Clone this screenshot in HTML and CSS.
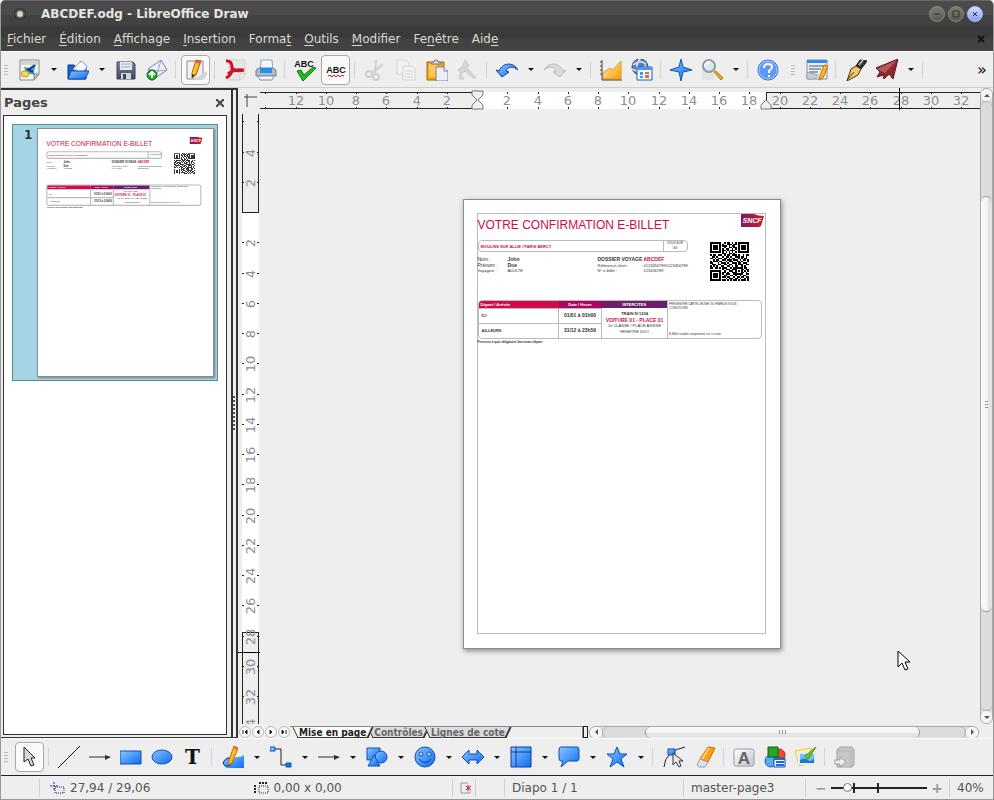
FILE: index.html
```html
<!DOCTYPE html>
<html lang="fr">
<head>
    <meta charset="UTF-8">
    <meta name="viewport" content="width=device-width, initial-scale=1.0">
    <title>ABCDEF.odg - LibreOffice Draw</title>
    <link rel="stylesheet" href="styles.css">
</head>
<body>

<!-- Dégradés et symboles partagés -->
<svg class="defs" aria-hidden="true">
    <defs>
        <linearGradient id="blue" x1="0" y1="0" x2="1" y2="1"><stop offset="0" stop-color="#8cc6ff"/><stop offset="1" stop-color="#0a6cf5"/></linearGradient>
        <linearGradient id="gold" x1="0" y1="0" x2="1" y2="1"><stop offset="0" stop-color="#fff3b0"/><stop offset="1" stop-color="#ff9a00"/></linearGradient>
        <linearGradient id="grey" x1="0" y1="0" x2="1" y2="1"><stop offset="0" stop-color="#ffffff"/><stop offset="1" stop-color="#c4c6cc"/></linearGradient>
        <linearGradient id="steel" x1="0" y1="0" x2="0" y2="1"><stop offset="0" stop-color="#8088a0"/><stop offset="1" stop-color="#3c4560"/></linearGradient>
        <linearGradient id="sncfRed" x1="0" y1="0" x2="1" y2="0"><stop offset="0" stop-color="#7b1a6b"/><stop offset="1" stop-color="#d81824"/></linearGradient>
        <symbol id="qr" viewBox="0 0 25 25"><path id="qrPath" shape-rendering="crispEdges"/></symbol>
        <symbol id="sncf" viewBox="0 0 24 13">
            <path d="M1 0H14Q18 2 24 2L21 12Q20 13 18 13H1Z" fill="url(#sncfRed)"/>
            <text x="12" y="9" class="sncf-text">SNCF</text>
        </symbol>
    </defs>
</svg>

<div class="window">
    <header class="titlebar">
        <svg class="app-dot" viewBox="0 0 12 12"><circle cx="6" cy="6" r="6" fill="#2e2e2e"/><circle cx="6" cy="6" r="5" fill="#555"/><circle cx="6" cy="6" r="3" fill="#d8d4cc"/></svg>
        <h1>ABCDEF.odg - LibreOffice Draw</h1>
        <div class="window-buttons">
            <button aria-label="Réduire"><svg viewBox="0 0 14 14"><path d="M4 7h6"/></svg></button>
            <button aria-label="Agrandir"><svg viewBox="0 0 14 14"><path d="M4 4h6v6h-6z"/></svg></button>
            <button class="close" aria-label="Fermer"><svg viewBox="0 0 14 14"><path d="M5 5l4 4M9 5l-4 4"/></svg></button>
        </div>
    </header>

    <nav class="menubar">
        <a href="#"><u>F</u>ichier</a>
        <a href="#"><u>É</u>dition</a>
        <a href="#"><u>A</u>ffichage</a>
        <a href="#"><u>I</u>nsertion</a>
        <a href="#">Forma<u>t</u></a>
        <a href="#"><u>O</u>utils</a>
        <a href="#"><u>M</u>odifier</a>
        <a href="#">Fe<u>n</u>être</a>
        <a href="#">Aid<u>e</u></a>
        <button class="close-doc" aria-label="Fermer le document"><svg viewBox="0 0 8 8"><path d="M1 1l6 6M7 1l-6 6" stroke="#111" stroke-width="2"/></svg></button>
    </nav>

    <div class="toolbar">
        <span class="grip"></span>
        <button aria-label="Nouveau"><svg viewBox="0 0 22 22"><path d="M1 1h19v14l-5 6h-14z" fill="#f4f4ee" stroke="#888a80"/><path d="M2 2h17v4h-17z" fill="#d4d6ce"/><path d="M5 8l6 1 6-3-2 6 1 4-9-2z" fill="#3a9be8"/><path d="M9 11l7-5M8 10l6 3" stroke="#173b64" stroke-width="2"/><ellipse cx="6" cy="15" rx="4" ry="3" fill="#f5d95a" stroke="#c89b1c"/><path d="M20 15l-5 6v-6z" fill="#bfc3bb" stroke="#888a80"/></svg></button>
        <button class="drop" aria-label="Options de Nouveau"></button>
        <button aria-label="Ouvrir"><svg viewBox="0 0 22 22"><path d="M1 6h6l2 2h10v12h-18z" fill="#1d62cc" stroke="#0c3c94"/><path d="M6 10l8-8 6 5-4 8z" fill="#f6f8ff" stroke="#8d9cc0"/><path d="M4 12h18l-4 8h-17z" fill="url(#blue)" stroke="#104cae"/></svg></button>
        <button class="drop" aria-label="Options de Ouvrir"></button>
        <button aria-label="Enregistrer"><svg viewBox="0 0 22 22"><path d="M2 3h16l2 2v15h-18z" fill="url(#steel)" stroke="#3b435a"/><path d="M5 3h12v8h-12z" fill="#e6eaf1"/><path d="M6 5h10M6 8h10" stroke="#aab0be"/><path d="M6 14h10v6h-10z" fill="#cfd3dc"/><path d="M8 15h3v5h-3z" fill="#3c4560"/></svg></button>
        <button aria-label="Envoyer par e-mail"><svg viewBox="0 0 22 22"><path d="M2 10l13-9 6 10-13 9z" fill="#eef0fb" stroke="#7e82a6"/><path d="M2 10l10 2 3-11M8 20l4-8 9-1" fill="none" stroke="#a0a4c4"/><circle cx="6" cy="16" r="5" fill="#19a821" stroke="#0b7013"/><path d="M6 19v-5M3 16l3-3 3 3" fill="none" stroke="#fff" stroke-width="2"/></svg></button>
        <span class="sep"></span>
        <button class="pressed" aria-label="Mode édition" aria-pressed="true"><svg viewBox="0 0 22 22"><path d="M2 2h16v18h-16z" fill="#f2f2f4" stroke="#8b8d92"/><path d="M8 21l14-9v4l-4 5z" fill="#d5d5d8"/><path d="M11 1l5 1-5 14-4 3v-5z" fill="#ffae1a" stroke="#b76500"/><path d="M13 2l-5 13" stroke="#ffe07a"/><path d="M11 1l5 1-1 3-5-2z" fill="#e05a48"/><path d="M7 15l3 1-3 3z" fill="#333"/></svg></button>
        <span class="sep"></span>
        <button aria-label="Exporter en PDF"><svg viewBox="0 0 22 22"><path d="M5 1h16v14l-5 6h-11z" fill="#e6e6e6" stroke="#cfcfcf"/><path d="M21 15l-5 6v-6z" fill="#f8f8f8" stroke="#cfcfcf"/><path d="M2 2q6-1 6 7 4 4 12 2M8 8q1 7-6 11M4 15q6-5 15-4" fill="none" stroke="#cf1020" stroke-width="3"/></svg></button>
        <button aria-label="Imprimer"><svg viewBox="0 0 22 22"><path d="M6 1h11l1 11h-13z" fill="#f4f7fb" stroke="#9aa2b2"/><path d="M1 11l3-2h14l3 2v6h-20z" fill="#b4b9c6" stroke="#767c8c"/><path d="M5 9h12v5h-12z" fill="#1e90ee"/><path d="M3 17h16l-2 4h-12z" fill="#f2f4f8" stroke="#8c92a2"/></svg></button>
        <span class="sep"></span>
        <button aria-label="Orthographe"><svg viewBox="0 0 22 22"><text x="10" y="8" class="abc">ABC</text><path d="M3 12l4-1 3 5 9-8 3 1-13 13z" fill="#1dbb1d" stroke="#0a7d0a"/></svg></button>
        <button class="pressed" aria-label="Vérification automatique" aria-pressed="true"><svg viewBox="0 0 22 22"><text x="11" y="14" class="abc">ABC</text><path d="M3 17l2-1 2 2 2-2 2 2 2-2 2 2 2-2 2 1" fill="none" stroke="#e01010"/></svg></button>
        <span class="sep"></span>
        <button disabled aria-label="Couper"><svg viewBox="0 0 22 22" fill="none" stroke="#cfcfcf" stroke-width="2"><path d="M12 1l-1 13M19 5l-11 9"/><circle cx="5" cy="15" r="3"/><circle cx="12" cy="18" r="3"/></svg></button>
        <button disabled aria-label="Copier"><svg viewBox="0 0 22 22" fill="#f2f2f2" stroke="#d4d4d4"><path d="M2 1h9l3 3v11h-12z"/><path d="M8 7h9l3 3v11h-12z"/><path d="M10 12h8M10 15h8M10 18h8"/></svg></button>
        <button aria-label="Coller"><svg viewBox="0 0 22 22"><path d="M1 3h17v18h-17z" fill="#f2a71d" stroke="#a8690a"/><path d="M3 5h8v13h-8z" fill="#ffc852"/><path d="M5 5q0-2 3-2l1-2h2l1 2q3 0 3 2z" fill="#e2e4e8" stroke="#70747c"/><path d="M10 8h8l4 4v10h-12z" fill="#eceefa" stroke="#7a80a4"/><path d="M18 8v4h4" fill="#fff" stroke="#7a80a4"/></svg></button>
        <button disabled aria-label="Pinceau de format"><svg viewBox="0 0 22 22" fill="#d6d6d6" stroke="#cccccc"><path d="M8 1l4 5-2 3 9 9-2 2-9-8-4 3-3-4 4-3z"/><path d="M3 15l4 5h-5z"/></svg></button>
        <span class="sep"></span>
        <button aria-label="Annuler"><svg viewBox="0 0 22 22"><path d="M0 11l3 1c3-8 14-10 19-1-5-4-10-4-12 1l3 1-7 5z" fill="url(#blue)" stroke="#0b479e"/></svg></button>
        <button class="drop" aria-label="Actions à annuler"></button>
        <button disabled aria-label="Rétablir"><svg viewBox="0 0 22 22"><path d="M22 11l-3 1c-3-8-14-10-19-1 5-4 10-4 12 1l-3 1 7 5z" fill="#dadada" stroke="#bcbcbc"/></svg></button>
        <button class="drop" aria-label="Actions à rétablir"></button>
        <span class="sep"></span>
        <button aria-label="Diagramme"><svg viewBox="0 0 22 22"><path d="M3 14l7-5 3 2 8-9v18h-18z" fill="url(#gold)" stroke="#e09a20"/><path d="M2 1v20h20M0 3h2M0 7h2M0 11h2M0 15h2" fill="none" stroke="#444"/></svg></button>
        <button aria-label="Hyperlien"><svg viewBox="0 0 22 22"><circle cx="9" cy="8" r="8" fill="#5b7bb5" stroke="#34508a"/><path d="M2 6q7-6 13-1M1 10q8 5 14-4M9 0q-6 7 0 15" fill="none" stroke="#cbd9f2" stroke-width="2"/><path d="M6 8h15v13h-15z" fill="#f2f8ff" stroke="#1b62c0"/><path d="M6 8h15v3h-15z" fill="#4a98ea"/><path d="M9 13h3v3h-3zM9 17h3v2h-3z" fill="#4a98ea"/><path d="M14 13h4v2h-4zM14 16h4v3h-4z" fill="#f26b21"/></svg></button>
        <span class="sep"></span>
        <button aria-label="Navigateur"><svg viewBox="0 0 22 22"><path d="M11 0l2 8 9 3-9 2-2 9-2-9-9-2 9-3z" fill="url(#blue)" stroke="#0d55b8"/></svg></button>
        <button aria-label="Zoom"><svg viewBox="0 0 22 22"><path d="M1 6h12v15h-12z" fill="#e2e2e2"/><path d="M13 13l2-1 7 7-2 2z" fill="#f5a21c" stroke="#c47a10"/><circle cx="8" cy="7" r="6" fill="#d5eaf2" stroke="#8b9ba2" stroke-width="2"/><path d="M4 7q1-4 5-4" fill="none" stroke="#fff" stroke-width="2"/></svg></button>
        <button class="drop" aria-label="Options de zoom"></button>
        <span class="sep"></span>
        <button aria-label="Aide"><svg viewBox="0 0 22 22"><circle cx="11" cy="11" r="10" fill="#5c98f8" stroke="#3068d0"/><circle cx="11" cy="11" r="9" fill="none" stroke="#b4d0ff"/><path d="M7 9q0-4 4-4t4 3q0 2-3 4v2" fill="none" stroke="#fff" stroke-width="2"/><path d="M11 16h2v2h-2z" fill="#fff"/></svg></button>
        <span class="grip second"></span>
        <button aria-label="Formulaire"><svg viewBox="0 0 22 22"><path d="M1 1h20v19h-20z" fill="#eceef4" stroke="#8a90a0"/><path d="M1 1h20v3h-20z" fill="#2c8af0"/><path d="M3 7h15M3 10h12M3 13h9" stroke="#9ba1b0" stroke-width="2"/><path d="M1 13l11 3-3 4h-8z" fill="#c9ccd4" stroke="#a0a4ae"/><path d="M18 6l4 1-5 12-4 2 1-4z" fill="#ffb822" stroke="#b97300"/></svg></button>
        <span class="sep"></span>
        <button aria-label="Stylo"><svg viewBox="0 0 22 22"><path d="M11 7l4-6 7 1-6 8z" fill="#333" stroke="#111"/><path d="M14 6l4-5" stroke="#bbb" stroke-width="2"/><path d="M11 7l5 3-3 6-11 6 4-12z" fill="#f3c766" stroke="#4b3410"/><path d="M2 21l7-8" stroke="#4b3410"/></svg></button>
        <button aria-label="Effet de flèche"><svg viewBox="0 0 22 22"><path d="M22 0l-5 20-4-5-5 5-1-4-6 2 3-5-4-4z" fill="#8c2a30" stroke="#5e1418"/><path d="M21 1l-12 13-8-4z" fill="#b8585c"/></svg></button>
        <button class="drop" aria-label="Autres effets"></button>
        <span class="sep"></span>
        <button class="more" aria-label="Plus d'outils">»</button>
    </div>

    <main class="main">
        <aside class="pages">
            <div class="pages-head">
                <h2>Pages</h2>
                <button aria-label="Fermer le volet"><svg viewBox="0 0 8 8"><path d="M0 0l8 8M8 0l-8 8" stroke="#444" stroke-width="2"/></svg></button>
            </div>
            <div class="pages-list">
                <a class="page-item" href="#page1">
                    <span class="page-number">1</span>
                    <svg class="thumb" viewBox="0 0 314 446" aria-hidden="true">
                        <text x="14" y="30" class="t-title">VOTRE CONFIRMATION E-BILLET</text>
                        <use href="#sncf" x="272" y="14" width="24" height="13"/>
                        <g fill="none" stroke="#bbb" stroke-width="2">
                            <rect x="15" y="41" width="207" height="12" rx="4"/>
                            <path d="M198 41v12"/>
                            <rect x="15" y="101" width="278" height="37" rx="4"/>
                        </g>
                        <text x="19" y="49" class="t-bold red">MOULINS SUR ALLIE / PARIS BERCY</text>
                        <text x="201" y="47" class="t-small">VOUS EUR</text>
                        <text x="15" y="62" class="t-small">Nom :</text><text x="45" y="62" class="t-name">John</text>
                        <text x="15" y="68" class="t-small">Prénom :</text><text x="45" y="68" class="t-name">Doe</text>
                        <text x="15" y="73" class="t-small">Voyageur :</text><text x="45" y="73" class="t-small">ADULTE</text>
                        <text x="132" y="62" class="t-name">DOSSIER VOYAGE :<tspan class="red">ABCDEF</tspan></text>
                        <text x="132" y="68" class="t-small">Référence client :</text><text x="179" y="68" class="t-small">01234567890123456789</text>
                        <text x="132" y="73" class="t-small">N° e-billet :</text><text x="179" y="73" class="t-small">123456789</text>
                        <use href="#qr" x="244" y="44" width="40" height="38"/>
                        <path d="M16 102h78v7h-78z" fill="#d10a4b"/><path d="M94 102h41v7h-41z" fill="#a80661"/><path d="M135 102h66v7h-66z" fill="#6d1d6c"/>
                        <path d="M16 124h119M94 109v29M135 109v29M201 102v36" stroke="#bbb" stroke-width="2"/>
                        <text x="19" y="107" class="t-bold white">Départ / Arrivée</text><text x="102" y="107" class="t-bold white">Date / Heure</text><text x="154" y="107" class="t-bold white">INTERCITES</text>
                        <text x="19" y="119" class="t-small">ICI</text><text x="19" y="132" class="t-small">AILLEURS</text>
                        <text x="100" y="119" class="t-name">01/01 à 01h00</text><text x="100" y="132" class="t-name">31/12 à 23h59</text>
                        <text x="154" y="114" class="t-small">TRAIN N°1234</text><text x="137" y="121" class="t-name red">VOITURE 01 - PLACE 01</text><text x="143" y="127" class="t-small">2e CLASSE / PLACE ASSISE</text><text x="155" y="133" class="t-small">FENETRE DUO</text>
                        <text x="203" y="105" class="t-tiny">PRESENTER CARTE JEUNE OU HIBRIDE SOUS</text><text x="203" y="109" class="t-tiny">CONDITIONS</text><text x="203" y="134" class="t-tiny">E-Billet valable uniquement sur ce train</text>
                        <text x="15" y="143" class="t-tiny bold">Présence à quai obligatoire 2mn avant départ.</text>
                    </svg>
                </a>
            </div>
        </aside>
        <div class="splitter"><svg viewBox="0 0 3 36"><path d="M1 0v36" stroke="#555" stroke-width="2" stroke-dasharray="2 2"/></svg></div>

        <section class="workspace">
            <div class="corner"><svg viewBox="0 0 22 22"><path d="M6 9h13M9 6v13" stroke="#444"/></svg></div>
            <div class="ruler-h"><svg id="rulerH" aria-hidden="true">
                <rect x="-10" y="4" width="228" height="16" class="ruler-out"/>
                <rect x="506" y="4" width="2000" height="16" class="ruler-out"/>
                <rect x="218" y="4" width="288" height="17" fill="#fff"/>
                <g id="scaleH" class="scale"></g>
                <path d="M212 3h11v4l-5 5 5 5v4h-11v-4l5-5-5-5z" class="marker"/>
                <path d="M501 21v-4l5-5 5 5v4z" class="marker"/>
                <path d="M639 0v24" class="pointer"/>
            </svg></div>
            <div class="ruler-v"><svg id="rulerV" aria-hidden="true">
                <rect x="4" y="-10" width="16" height="112" class="ruler-out"/>
                <rect x="4" y="103" width="17" height="419" fill="#fff"/>
                <rect x="4" y="522" width="16" height="2000" class="ruler-out"/>
                <g id="scaleV" class="scale"></g>
                <rect x="0" y="-1" width="22" height="5" fill="#eeeeee"/>
                <path d="M0 542h25" class="pointer"/>
            </svg></div>

            <div class="canvas">
                <article class="page" id="page1">
                    <div class="sheet">
                        <div class="sheet-head">
                            <h3>VOTRE CONFIRMATION E-BILLET</h3>
                            <svg class="sncf" viewBox="0 0 24 13" role="img" aria-label="Logo"><use href="#sncf" width="24" height="13"/></svg>
                        </div>
                        <div class="sheet-info">
                            <div class="info-left">
                                <div class="route">
                                    <strong>MOULINS SUR ALLIE / PARIS BERCY</strong>
                                    <span>VOUS EUR<br>GG</span>
                                </div>
                                <div class="traveller">
                                    <span>Nom :</span><b>John</b><b>DOSSIER VOYAGE :</b><b class="red">ABCDEF</b>
                                    <span>Prénom :</span><b>Doe</b><small>Référence client :</small><small>01234567890123456789</small>
                                    <small>Voyageur :</small><small>ADULTE</small><small>N° e-billet :</small><small>123456789</small>
                                </div>
                            </div>
                            <svg class="qr" viewBox="0 0 25 25" role="img" aria-label="Code QR"><use href="#qr" width="25" height="25"/></svg>
                        </div>
                        <div class="trip-frame">
                            <table class="trip">
                                <tr>
                                    <th class="c-from">Départ / Arrivée</th>
                                    <th class="c-date">Date / Heure</th>
                                    <th class="c-train">INTERCITES</th>
                                    <td class="notes" rowspan="3"><div><p>PRESENTER CARTE JEUNE OU HIBRIDE SOUS CONDITIONS</p><p>E-Billet valable uniquement sur ce train</p></div></td>
                                </tr>
                                <tr>
                                    <td class="place">ICI</td>
                                    <td class="date">01/01 à 01h00</td>
                                    <td class="train" rowspan="2"><p><b>TRAIN N°1234</b></p><p class="seat">VOITURE 01 - PLACE 01</p><p>2e CLASSE / PLACE ASSISE</p><p>FENETRE DUO</p></td>
                                </tr>
                                <tr>
                                    <td class="place">AILLEURS</td>
                                    <td class="date">31/12 à 23h59</td>
                                </tr>
                            </table>
                        </div>
                        <p class="notice">Présence à quai obligatoire 2mn avant départ.</p>
                    </div>
                </article>
                <svg class="mouse" viewBox="0 0 14 21"><path d="M1 1v16l4-4 3 7 3-1-3-7h5z" fill="#fff" stroke="#000"/></svg>
            </div>

            <div class="scroll-v">
                <button aria-label="Défiler vers le haut"><i class="up"></i></button>
                <div class="track"><div class="thumb-v"><i></i></div></div>
                <button aria-label="Défiler vers le bas"><i class="down"></i></button>
            </div>

            <div class="bottom-bar">
                <div class="tab-nav">
                    <button aria-label="Première couche"><svg viewBox="0 0 10 10"><path d="M3 3v4M7 3v4l-2-2z"/></svg></button>
                    <button aria-label="Couche précédente"><svg viewBox="0 0 10 10"><path d="M6 3v4l-2-2z"/></svg></button>
                    <button aria-label="Couche suivante"><svg viewBox="0 0 10 10"><path d="M4 3v4l2-2z"/></svg></button>
                    <button aria-label="Dernière couche"><svg viewBox="0 0 10 10"><path d="M3 3v4l2-2zM7 3v4"/></svg></button>
                </div>
                <div class="tabs">
                    <button class="tab active">Mise en page</button>
                    <button class="tab">Contrôles</button>
                    <button class="tab">Lignes de cote</button>
                </div>
                <span class="tab-handle"></span>
                <div class="scroll-h">
                    <button aria-label="Défiler à gauche"><i class="left"></i></button>
                    <div class="track"><div class="thumb-h"><i></i></div></div>
                    <button aria-label="Défiler à droite"><i class="right"></i></button>
                </div>
            </div>
        </section>
    </main>

    <div class="toolbar drawing">
        <span class="grip"></span>
        <button class="pressed" aria-label="Sélectionner" aria-pressed="true"><svg viewBox="0 0 22 22"><path d="M5 1v15l4-3 3 7 3-1-3-7h4z" fill="#d8dade" stroke="#222"/></svg></button>
        <span class="sep"></span>
        <button aria-label="Ligne"><svg viewBox="0 0 22 22"><path d="M0 22l22-22" stroke="#111"/></svg></button>
        <button aria-label="Flèche"><svg viewBox="0 0 22 22"><path d="M0 11h18" stroke="#333"/><path d="M16 9l6 2-6 3z" fill="#333"/></svg></button>
        <button aria-label="Rectangle"><svg viewBox="0 0 22 22"><path d="M0 5h21v13h-21z" fill="url(#blue)" stroke="#0c4fb4"/></svg></button>
        <button aria-label="Ellipse"><svg viewBox="0 0 22 22"><ellipse cx="11" cy="11" rx="10" ry="7" fill="url(#blue)" stroke="#0c4fb4"/></svg></button>
        <button class="text-tool" aria-label="Texte">T</button>
        <span class="sep wide"></span>
        <button aria-label="Courbe"><svg viewBox="0 0 22 22"><path d="M1 16q3-6 10-5t11-2v13h-17q-4-2-4-6z" fill="url(#blue)"/><path d="M12 12q-9-1-11 5 2 5 8 2" fill="none" stroke="#123a78"/><path d="M12 0l4 2-6 15-4 2 1-5z" fill="#ffb822" stroke="#b97300"/><path d="M12 0l4 2-1 2-4-2z" fill="#e8674a"/></svg></button>
        <button class="drop" aria-label="Types de courbe"></button>
        <button aria-label="Connecteur"><svg viewBox="0 0 22 22"><path d="M3 3h8v16h8" fill="none" stroke="#222"/><path d="M0 1h5v4h-5zM16 17h5v4h-5z" fill="url(#blue)" stroke="#0c4fb4"/></svg></button>
        <button class="drop" aria-label="Types de connecteur"></button>
        <button aria-label="Lignes et flèches"><svg viewBox="0 0 22 22"><path d="M0 11h18" stroke="#333"/><path d="M16 9l6 2-6 3z" fill="#333"/></svg></button>
        <button class="drop" aria-label="Types de flèche"></button>
        <button aria-label="Formes de base"><svg viewBox="0 0 22 22" fill="url(#blue)" stroke="#0c4fb4"><path d="M1 2h13v12h-13z"/><circle cx="15" cy="11" r="6"/><path d="M8 9l6 11h-12z"/></svg></button>
        <button class="drop" aria-label="Autres formes de base"></button>
        <button aria-label="Formes de symboles"><svg viewBox="0 0 22 22"><circle cx="11" cy="11" r="10" fill="url(#blue)" stroke="#0c4fb4"/><circle cx="7" cy="8" r="2" fill="#bfe0ff" stroke="#0c4fb4"/><circle cx="15" cy="8" r="2" fill="#bfe0ff" stroke="#0c4fb4"/><path d="M5 13q6 7 12 0" fill="none" stroke="#0b3d8c"/></svg></button>
        <button class="drop" aria-label="Autres symboles"></button>
        <button aria-label="Flèches pleines"><svg viewBox="0 0 22 22"><path d="M0 11l7-7v4h8v-4l7 7-7 7v-4h-8v4z" fill="url(#blue)" stroke="#0c4fb4"/></svg></button>
        <button class="drop" aria-label="Autres flèches"></button>
        <button aria-label="Organigrammes"><svg viewBox="0 0 22 22"><path d="M1 1h20v20h-20z" fill="url(#blue)" stroke="#0a3f94"/><path d="M6 1v20M1 6h20" stroke="#0a3f94"/></svg></button>
        <button class="drop" aria-label="Autres organigrammes"></button>
        <button aria-label="Légendes"><svg viewBox="0 0 22 22"><path d="M3 1h16q2 0 2 3v8q0 3-2 3h-9l-7 6 2-6h-2q-2 0-2-3v-8q0-3 2-3z" fill="url(#blue)" stroke="#0c4fb4"/></svg></button>
        <button class="drop" aria-label="Autres légendes"></button>
        <button aria-label="Étoiles"><svg viewBox="0 0 22 22"><path d="M11 1l3 7h7l-6 5 3 8-7-5-7 5 3-8-6-5h7z" fill="url(#blue)" stroke="#0c4fb4"/></svg></button>
        <button class="drop" aria-label="Autres étoiles"></button>
        <span class="sep wide"></span>
        <button aria-label="Points"><svg viewBox="0 0 22 22"><path d="M1 21q1-16 21-20" fill="none" stroke="#222"/><path d="M5 3h7v6h-7z" fill="url(#blue)" stroke="#0c4fb4"/><path d="M10 7v12l3-3 3 5 2-1-2-5h4z" fill="#e4e6ea" stroke="#333"/></svg></button>
        <button aria-label="Points de collage"><svg viewBox="0 0 22 22"><path d="M14 1l7 1-7 14-8-3z" fill="#ff9c1a" stroke="#c26a00"/><path d="M15 2l-7 11" stroke="#ffd27a" stroke-width="2"/><path d="M6 13l8 3-3 5h-6l-2-2z" fill="#dfe2ea" stroke="#9aa0ae"/></svg></button>
        <span class="sep"></span>
        <button aria-label="Fontwork"><svg viewBox="0 0 22 22"><rect x="1" y="3" width="20" height="17" rx="2" fill="url(#grey)" stroke="#9a9cae"/><text x="11" y="18" class="fontwork">A</text></svg></button>
        <button aria-label="Gallery"><svg viewBox="0 0 22 22"><circle cx="15" cy="9" r="6" fill="#f04a28" stroke="#b02408"/><circle cx="7" cy="15" r="6" fill="#5ba8f4" stroke="#1d5cb4"/><path d="M4 1h10v10h-10z" fill="#26a526" stroke="#0d600d"/><path d="M10 12h11v9h-11z" fill="#f2f6fc" stroke="#1548a8"/><path d="M10 13h11M12 16h8M12 19h8" stroke="#1d6ad8" stroke-width="2"/></svg></button>
        <button aria-label="Image"><svg viewBox="0 0 22 22"><path d="M0 5l16-3 3 15-15 3z" fill="#fff29a" stroke="#dccb62"/><path d="M4 7h16v11h-16z" fill="#6cc0f4" stroke="#e4eef6" stroke-width="2"/><path d="M5 17v-3q5-3 8 0t6-2v5z" fill="#1f78c4"/><path d="M10 10l11-9-8 12z" fill="#7ec31e" stroke="#4e8c10"/></svg></button>
        <span class="sep"></span>
        <button disabled aria-label="Extrusion"><svg viewBox="0 0 22 22"><path d="M3 4l3-3h12l2 3v15l-2 2h-15z" fill="#c6c6c6" stroke="#a4a4a4"/><path d="M3 5h14v15" fill="none" stroke="#b4b4b4"/><path d="M1 14h5v-3l6 5-6 5v-3h-5z" fill="#ececec" stroke="#a0a0a0"/></svg></button>
    </div>

    <footer class="statusbar">
        <span class="cell first"></span>
        <span class="cell position"><svg viewBox="0 0 16 12"><path d="M4 0v9M0 4h8" stroke="#2222cc" stroke-dasharray="2 1"/><path d="M5 5h9v6h-9z" fill="none" stroke="#222" stroke-dasharray="1 1"/></svg>27,94 / 29,06</span>
        <span class="cell size"><svg viewBox="0 0 16 12"><path d="M1 3v9M5 1h9" stroke="#222" stroke-width="2" stroke-dasharray="2 1"/><path d="M5 4h9v7h-9z" fill="none" stroke="#222" stroke-dasharray="1 1"/></svg>0,00 x 0,00</span>
        <span class="cell modified"><svg viewBox="0 0 12 12"><path d="M8 1h-7v10h9v-2" fill="none" stroke="#999"/><path d="M8 3v6M6 4l5 4M11 4l-5 4" stroke="#c01818"/></svg></span>
        <span class="cell signature"></span>
        <span class="cell slide">Diapo 1 / 1</span>
        <span class="cell master">master-page3</span>
        <span class="cell zoom">
            <button aria-label="Zoom arrière">−</button>
            <input type="range" min="0" max="100" value="14" aria-label="Facteur de zoom">
            <button aria-label="Zoom avant">+</button>
        </span>
        <span class="cell percent">40%</span>
    </footer>
</div>

<script>
const svgNs = 'http://www.w3.org/2000/svg';

function addNode(parent, name, attrs, text) {
    const node = document.createElementNS(svgNs, name);
    Object.entries(attrs).forEach(([key, value]) => node.setAttribute(key, value));
    if (text) node.textContent = text;
    parent.appendChild(node);
}

// Graduations : un chiffre tous les 2 cm, zéro à l'origine de la page
function drawScale(id, zero, first, length, vertical) {
    const scale = document.getElementById(id);
    scale.innerHTML = '';
    for (let cm = first; zero + cm * 121 / 8 < length + 4; cm += 2) {
        if (cm === 0) continue;
        const pos = Math.round(zero + cm * 121 / 8);
        if (vertical) {
            addNode(scale, 'path', { d: `M4 ${pos}h2M19 ${pos}h2` });
            if (cm > -6) addNode(scale, 'text', { x: 17, y: pos + 1, transform: `rotate(-90 17 ${pos + 1})` }, String(Math.abs(cm)));
        } else {
            addNode(scale, 'path', { d: `M${pos} 4v2M${pos} 19v2` });
            if (cm > -14) addNode(scale, 'text', { x: pos, y: 17 }, String(Math.abs(cm)));
        }
    }
}

function drawRulers() {
    drawScale('scaleH', 217, -14, document.getElementById('rulerH').clientWidth, false);
    drawScale('scaleV', 102, -6, document.getElementById('rulerV').clientHeight, true);
}

const qrRows = [
    '1111111001011010101111111',
    '1000001010011101101000001',
    '1011101011101011001011101',
    '1011101001001101101011101',
    '1011101010110010101011101',
    '1000001011010111001000001',
    '1111111010101010101111111',
    '0000000011001101000000000',
    '1011011101011011101001011',
    '0110100010110100111011010',
    '1101011101101011001010110',
    '0010110011011101110101101',
    '1011101100101110011010001',
    '1100010111010011101101110',
    '0111011001101100101110011',
    '1010100110011010110010100',
    '1101101011100101111110110',
    '0000000010111011100011011',
    '1111111001001110101010101',
    '1000001011010011100011010',
    '1011101010111001111110011',
    '1011101001100110100101100',
    '1011101011011001011011011',
    '1000001000101110110100101',
    '1111111011010101101011101'
];

function drawQr() {
    let d = '';
    qrRows.forEach((row, y) => {
        [...row].forEach((bit, x) => {
            if (bit === '1') d += `M${x} ${y}h1v1h-1z`;
        });
    });
    document.getElementById('qrPath').setAttribute('d', d);
}

drawRulers();
drawQr();
window.addEventListener('resize', drawRulers);
</script>
</body>
</html>
```
FILE: styles.css
```css
* {
    box-sizing: border-box;
}
body {
    margin: 0;
    font-family: "DejaVu Sans", sans-serif;
    font-size: 12px;
    color: #444;
    background: #fff;
}
h1, h2, h3, p {
    margin: 0;
}
button {
    margin: 0;
    padding: 0;
    border: none;
    background: none;
    font: inherit;
    color: inherit;
}
svg {
    display: block;
}
.defs {
    position: absolute;
    width: 0;
    height: 0;
}
.window {
    display: flex;
    flex-direction: column;
    height: 100vh;
    background: #eeeeee;
    border: 1px solid #999;
    border-top: none;
    border-radius: 5px 5px 0 0;
    overflow: hidden;
}

/* Titre et menus */
.titlebar {
    display: flex;
    align-items: center;
    height: 26px;
    padding: 0 10px 0 13px;
    background: linear-gradient(#4a4a4a 14px, #424242 14px);
    border-top: 1px solid #666;
    color: #e4e4e0;
}
.app-dot {
    width: 12px;
    height: 12px;
}
.titlebar h1 {
    flex: 1;
    margin-left: 15px;
    font-size: 12px;
    font-weight: bold;
}
.window-buttons {
    display: flex;
    gap: 3px;
}
.window-buttons button {
    width: 16px;
    height: 16px;
    border-radius: 8px;
    background: linear-gradient(#7c7a74, #5c5a54);
    border: 1px solid #8a8880;
}
.window-buttons svg {
    width: 14px;
    height: 14px;
    fill: none;
    stroke: #33322e;
}
.window-buttons .close {
    background: linear-gradient(#d4dcff, #8c9cf0);
    border-color: #b0bcff;
}
.menubar {
    display: flex;
    align-items: center;
    height: 25px;
    padding: 0 8px 0 6px;
    gap: 13px;
    background: linear-gradient(#3a3a3a 12px, #424242 12px);
}
.menubar a {
    color: #d8dad0;
    text-decoration: none;
}
.menubar u {
    text-underline-offset: 2px;
}
.close-doc {
    margin-left: auto;
}
.close-doc svg, .pages-head svg {
    width: 8px;
    height: 8px;
}

/* Barres d'outils */
.toolbar {
    display: flex;
    align-items: center;
    flex: none;
    height: 37px;
    border-top: 1px solid #fff;
    border-bottom: 1px solid #cfcfcf;
}
.toolbar button {
    display: flex;
    align-items: center;
    justify-content: center;
    flex: none;
    width: 31px;
    height: 30px;
}
.toolbar button svg {
    width: 22px;
    height: 22px;
}
.toolbar .pressed {
    width: 29px;
    margin: 0 1px;
    background: #fafafa;
    border: 1px solid #aaa;
    border-radius: 4px;
}
.toolbar .drop {
    width: 17px;
}
.drop::before {
    content: "";
    border: 3px solid transparent;
    border-top-color: #111;
    border-bottom: none;
}
.sep {
    flex: none;
    width: 1px;
    height: 18px;
    margin: 0 4px 0 3px;
    background: #d4d4d4;
}
.sep.wide {
    margin-right: 5px;
}
.grip {
    flex: none;
    width: 4px;
    height: 10px;
    margin: 0 6px 0 3px;
    background: repeating-linear-gradient(#bbb 0 1px, transparent 1px 3px);
}
.grip.second {
    margin: 0 6px 0 8px;
}
.toolbar .more {
    width: 16px;
    margin: 0 3px 0 auto;
    font-size: 16px;
    color: #111;
}
.toolbar .text-tool {
    font-family: "DejaVu Serif", serif;
    font-size: 20px;
    font-weight: bold;
    line-height: 22px;
    color: #111;
}
.abc {
    font-family: "Liberation Sans", sans-serif;
    font-size: 9px;
    font-weight: bold;
    text-anchor: middle;
    fill: #111;
}
.fontwork {
    font-family: "Liberation Sans", sans-serif;
    font-size: 17px;
    font-weight: bold;
    text-anchor: middle;
    fill: #666;
}

/* Volet Pages */
.main {
    display: flex;
    flex: 1;
    min-height: 0;
}
.pages {
    display: flex;
    flex-direction: column;
    width: 230px;
    padding: 0 4px 2px 2px;
    border-top: 2px solid #333;
    border-bottom: 1px solid #333;
}
.pages-head {
    display: flex;
    align-items: center;
    justify-content: space-between;
    height: 25px;
    padding: 0 3px 0 1px;
}
.pages-head h2 {
    font-size: 13px;
}
.pages-list {
    flex: 1;
    padding: 8px;
    background: #fff;
    border: 1px solid #333;
}
.page-item {
    display: flex;
    justify-content: space-between;
    padding: 3px;
    background: #a5d5e5;
    border: 1px solid #5b8c93;
    color: #333;
    text-decoration: none;
}
.page-number {
    margin-left: 8px;
    font-size: 12px;
    font-weight: bold;
}
.thumb {
    width: 177px;
    height: 249px;
    background: #fff;
    border: 1px solid #8c8c98;
    box-shadow: 1px 1px 2px #777;
    font-family: "Liberation Sans", sans-serif;
    fill: #333;
}
.t-title {
    font-size: 12px;
    fill: #d10a4b;
}
.t-bold {
    font-size: 4px;
    font-weight: bold;
}
.t-name {
    font-size: 5px;
    font-weight: bold;
}
.t-small {
    font-size: 4px;
}
.t-tiny {
    font-size: 3px;
}
.bold {
    font-weight: bold;
}
.red {
    color: #d10a4b;
    fill: #d10a4b;
}
.white {
    fill: #fff;
}
.splitter {
    display: flex;
    align-items: center;
    width: 7px;
    border: solid #333;
    border-width: 2px 2px 1px;
}
.splitter svg {
    width: 3px;
    height: 36px;
}

/* Règles et espace de travail */
.workspace {
    display: grid;
    flex: 1;
    min-width: 0;
    grid-template-columns: 22px 1fr 13px;
    grid-template-rows: 22px 1fr 14px;
}
.corner svg {
    width: 22px;
    height: 22px;
}
.ruler-h, .ruler-v {
    min-width: 0;
    min-height: 0;
}
.ruler-h svg {
    width: 100%;
    height: 22px;
}
.ruler-v svg {
    width: 22px;
    height: 100%;
}
#rulerH, #rulerV {
    shape-rendering: crispEdges;
}
.ruler-out {
    fill: #eeeeee;
    stroke: #222;
}
.scale path {
    stroke: #222;
}
.scale text {
    font-size: 13px;
    text-anchor: middle;
    fill: #8e8e8e;
}
.marker {
    fill: #eeeeee;
    stroke: #777;
    shape-rendering: auto;
}
.pointer {
    stroke: #000;
}
.ruler-v {
    grid-column: 1;
    grid-row: 2;
}
.canvas {
    position: relative;
    grid-column: 2;
    grid-row: 2;
    display: flex;
    justify-content: center;
    align-items: flex-start;
    padding: 89px 0 0 3px;
    overflow: hidden;
}
.mouse {
    position: absolute;
    left: 637px;
    top: 540px;
    width: 14px;
    height: 21px;
}

/* Page du document */
.page {
    display: flex;
    width: 318px;
    height: 450px;
    padding: 13px 14px 14px 13px;
    background: #fff;
    border: 1px solid #8c8c94;
    box-shadow: 1px 2px 5px #888;
    font-family: "Liberation Sans", sans-serif;
    font-size: 5px;
    line-height: 5px;
    color: #333;
}
.sheet {
    flex: 1;
    min-width: 0;
    border: 1px solid #bbb;
}
.sheet-head {
    display: flex;
    justify-content: space-between;
    align-items: flex-start;
    height: 26px;
    padding-right: 1px;
}
.sheet-head h3 {
    font-size: 12px;
    font-weight: normal;
    line-height: 22px;
    white-space: nowrap;
    color: #d10a4b;
}
.sncf {
    width: 24px;
    height: 13px;
}
.sncf-text {
    font-family: "Liberation Sans", sans-serif;
    font-size: 7px;
    font-weight: bold;
    font-style: italic;
    text-anchor: middle;
    fill: #fff;
}
.sheet-info {
    display: flex;
    height: 60px;
}
.info-left {
    width: 232px;
}
.route {
    display: flex;
    align-items: center;
    width: 210px;
    height: 12px;
    border: 1px solid #bbb;
    border-radius: 4px;
    font-size: 4px;
    line-height: 5px;
}
.route strong {
    flex: 1;
    padding-left: 2px;
    color: #d10a4b;
}
.route span {
    width: 24px;
    border-left: 1px solid #bbb;
    text-align: center;
    font-size: 3px;
}
.traveller {
    display: grid;
    grid-template-columns: 30px 90px 46px 1fr;
    grid-template-rows: 6px 6px 5px;
    align-items: center;
    margin-top: 4px;
    white-space: nowrap;
}
.traveller small {
    font-size: 4px;
}
.qr {
    width: 39px;
    height: 39px;
    margin-top: 2px;
}
.trip-frame {
    width: 284px;
    border: 1px solid #bbb;
    border-radius: 4px;
    overflow: hidden;
}
.trip {
    width: 100%;
    table-layout: fixed;
    border-collapse: collapse;
    line-height: 5px;
}
.trip th, .trip td {
    padding: 0;
}
.trip th {
    height: 7px;
    font-size: 4px;
    color: #fff;
}
.c-from {
    width: 80px;
    background: #d10a4b;
}
.trip .c-from {
    padding-left: 2px;
    text-align: left;
}
.c-date {
    width: 43px;
    background: #a80661;
}
.c-train {
    width: 66px;
    background: #6d1d6c;
}
.trip .place, .trip .date {
    height: 15px;
    border: 1px solid #bbb;
    border-left: none;
    font-weight: bold;
}
.trip .place {
    padding-left: 3px;
    font-size: 4px;
}
.trip .date {
    text-align: center;
}
.trip tr:last-child td {
    border-bottom: none;
}
.trip .train {
    font-size: 4px;
    line-height: 6px;
    text-align: center;
    white-space: nowrap;
}
.trip .seat {
    font-size: 5px;
    font-weight: bold;
    color: #d10a4b;
}
.trip .notes {
    border-left: 1px solid #bbb;
    font-size: 3px;
    line-height: 4px;
    vertical-align: top;
}
.notes div {
    display: flex;
    flex-direction: column;
    justify-content: space-between;
    height: 35px;
    padding: 1px 20px 0 1px;
}
.notice {
    font-size: 3px;
    font-weight: bold;
    line-height: 6px;
}

/* Barres de défilement */
.scroll-v {
    grid-column: 3;
    grid-row: 1 / 3;
    display: flex;
    flex-direction: column;
    border: 1px solid #aaa;
    border-radius: 6px;
    background: #dcdcdc;
}
.scroll-h {
    display: flex;
    flex: 1;
    height: 13px;
    border: 1px solid #aaa;
    border-radius: 6px;
    background: #dcdcdc;
}
.scroll-v button, .scroll-h button {
    display: flex;
    align-items: center;
    justify-content: center;
    flex: none;
    width: 12px;
    height: 12px;
    border-radius: 6px;
    background: #f6f6f6;
}
.scroll-v button {
    width: 11px;
}
.scroll-h button {
    height: 11px;
}
.scroll-v .track {
    display: flex;
    flex: 1;
    padding: 94px 0 98px;
    border: solid #aaa;
    border-width: 1px 0;
    border-radius: 6px;
}
.scroll-h .track {
    display: flex;
    flex: 1;
    padding: 0 45px 0 42px;
    border: solid #aaa;
    border-width: 0 1px;
    border-radius: 6px;
}
.thumb-v, .thumb-h {
    display: flex;
    align-items: center;
    justify-content: center;
    flex: 1;
    border-radius: 6px;
}
.thumb-v {
    border: solid #999;
    border-width: 1px 0;
    background: linear-gradient(90deg, #fafafa, #f2f2f2 60%, #e2e2e2 60%);
}
.thumb-h {
    border: solid #999;
    border-width: 0 1px;
    background: linear-gradient(#fafafa, #f4f4f4 50%, #e4e4e4 50%);
}
.thumb-v i {
    width: 3px;
    height: 7px;
    background: repeating-linear-gradient(#999 0 1px, transparent 1px 3px);
}
.thumb-h i {
    width: 7px;
    height: 4px;
    background: repeating-linear-gradient(90deg, #999 0 1px, transparent 1px 3px);
}
.up, .down, .left, .right {
    border: 3px solid transparent;
}
.up {
    border-top: none;
    border-bottom-color: #555;
}
.down {
    border-bottom: none;
    border-top-color: #555;
}
.left {
    border-left: none;
    border-right-color: #555;
}
.right {
    border-right: none;
    border-left-color: #555;
}

/* Onglets de couches */
.bottom-bar {
    grid-column: 1 / 4;
    grid-row: 3;
    display: flex;
    align-items: center;
    padding: 2px 14px 0 1px;
}
.tab-nav {
    display: flex;
    gap: 1px;
}
.tab-nav button {
    width: 12px;
    height: 12px;
    border: 1px solid #bbb;
    border-radius: 6px;
    background: #f8f8f8;
}
.tab-nav svg {
    width: 10px;
    height: 10px;
    fill: #222;
    stroke: #222;
}
.tabs {
    display: flex;
    width: 293px;
    height: 12px;
    padding-left: 5px;
    border-top: 1px solid #888;
    border-right: 1px solid #888;
}
.tab {
    position: relative;
    padding: 0 4px;
    font-family: "DejaVu Sans Condensed", "DejaVu Sans", sans-serif;
    font-size: 10px;
    font-weight: bold;
    line-height: 10px;
    white-space: nowrap;
    color: #666;
    z-index: 0;
}
/* Chaque moitié porte un bord incliné, l'onglet s'évase vers le haut */
.tab::before, .tab::after {
    content: "";
    position: absolute;
    top: 0;
    bottom: 0;
    z-index: -1;
    background: #dcdcdc;
    border-bottom: 1px solid #333;
}
.tab::before {
    left: 0;
    right: 30%;
    border-left: 1px solid #333;
    transform: skewX(25deg);
}
.tab::after {
    left: 30%;
    right: 0;
    border-right: 2px solid #333;
    transform: skewX(-25deg);
}
.tab.active {
    color: #222;
    z-index: 1;
}
.tab.active::before, .tab.active::after {
    background: #fff;
}
.tab-handle {
    width: 5px;
    height: 12px;
    margin-right: 1px;
    border: 1px solid #222;
}

/* Barre de dessin et barre d'état */
.drawing {
    height: 38px;
    border-bottom: 1px solid #222;
}
.statusbar {
    display: flex;
    align-items: center;
    flex: none;
    height: 23px;
    color: #555;
}
.cell {
    display: flex;
    align-items: center;
    height: 18px;
    border-right: 1px solid #d0d0d0;
    white-space: nowrap;
}
.first {
    width: 39px;
}
.position {
    flex: 1;
    padding-left: 10px;
    border: none;
}
.size {
    flex: 1;
    padding-left: 5px;
}
.position svg, .size svg {
    width: 16px;
    height: 12px;
    margin-right: 4px;
}
.modified {
    width: 23px;
    padding-left: 7px;
}
.modified svg {
    width: 12px;
    height: 12px;
}
.signature {
    width: 29px;
}
.slide {
    width: 179px;
    padding-left: 7px;
}
.master {
    width: 122px;
    padding-left: 7px;
}
.zoom {
    width: 144px;
    padding: 0 6px 0 9px;
    gap: 4px;
}
.zoom button {
    width: 12px;
    font-size: 14px;
    font-weight: bold;
    color: #999;
}
.zoom input {
    flex: 1;
    min-width: 0;
    height: 12px;
    margin: 0;
    appearance: none;
    background:
        linear-gradient(#222, #222) 22px 1px / 2px 10px no-repeat,
        linear-gradient(#222, #222) 46px 1px / 2px 10px no-repeat,
        linear-gradient(#222, #222) 0 5px / 100% 2px no-repeat;
}
.zoom input::-webkit-slider-thumb {
    appearance: none;
    width: 9px;
    height: 9px;
    border: 1px solid #777;
    border-radius: 5px;
    background: #fff;
}
.percent {
    width: 43px;
    padding-left: 7px;
    border: none;
}
```
